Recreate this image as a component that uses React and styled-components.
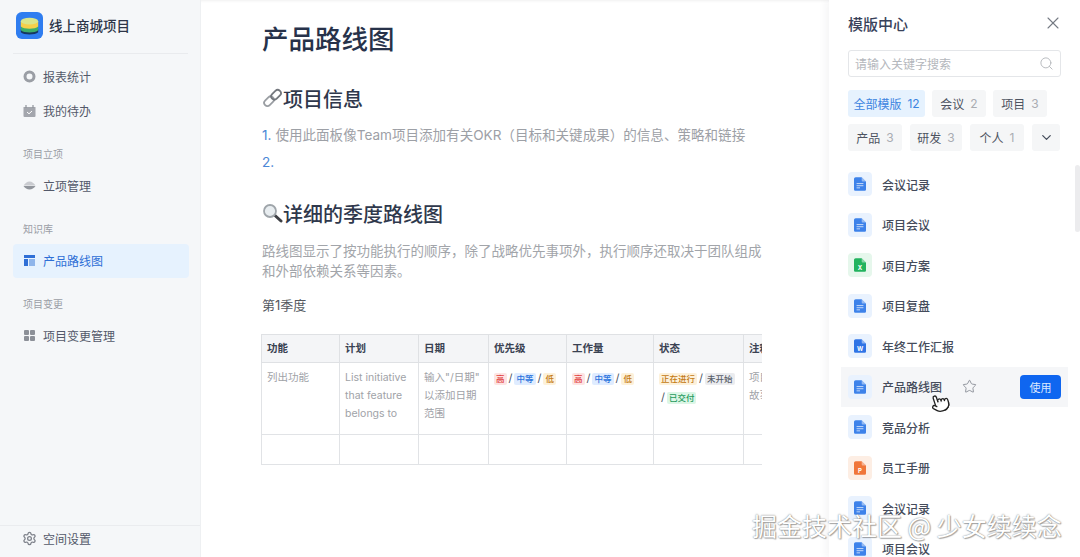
import styled, { createGlobalStyle } from "styled-components";
import { ChevronDown, Pointer, Search, Settings, Star, X } from "lucide-react";

const GlobalStyle = createGlobalStyle`
  html, body {
    margin: 0;
    height: 100%;
    overflow: hidden;
    background: #fff;
  }
  * { box-sizing: border-box; }
  body {
    font-family: Inter, "Noto Sans CJK SC", "Noto Sans", sans-serif;
  }
`;

const Page = styled.div`
  position: relative;
  display: flex;
  width: 1080px;
  height: 557px;
  overflow: hidden;
`;

/* ---------- sidebar ---------- */
const Sidebar = styled.aside`
  width: 201px;
  flex: none;
  display: flex;
  flex-direction: column;
  background: #f5f7f9;
  border-right: 1px solid #eef0f2;
`;

const Brand = styled.div`
  height: 54px;
  margin: 0 12px 5.5px 13px;
  padding: 0 3px 3px 3px;
  display: flex;
  align-items: center;
  gap: 6px;
  border-bottom: 1px solid #e9ebee;
  font-size: 13.5px;
  font-weight: 500;
  color: #2e3648;
`;

const Nav = styled.nav`
  flex: 1;
  padding: 0 11px 0 13px;
`;

const NavItem = styled.div`
  height: 34px;
  padding: 0 10px 1px;
  display: flex;
  align-items: center;
  gap: 7px;
  border-radius: 4px;
  font-size: 12px;
  color: ${(p) => (p.$active ? "#2e6fd6" : "#53596a")};
  background: ${(p) => (p.$active ? "#e6f2fe" : "transparent")};
`;

const SectionLabel = styled.div`
  height: 41px;
  padding: 17px 10px 0;
  font-size: 10px;
  line-height: 18px;
  color: #9a9ea6;
`;

const SidebarFooter = styled.div`
  height: 32px;
  padding: 0 22px 6px;
  display: flex;
  align-items: center;
  gap: 6px;
  border-top: 1px solid #eaecef;
  font-size: 12px;
  color: #53596a;
`;

/* ---------- document ---------- */
const Main = styled.main`
  width: 628px;
  flex: none;
  padding: 0 67px 0 61px;
  overflow: hidden;
  box-shadow: inset 0 3px 3px -2px #f0f0f0;
`;

const Title = styled.h1`
  margin: 0;
  padding-top: 20px;
  font-size: 26.5px;
  line-height: 38px;
  font-weight: 500;
  color: #27324a;
`;

const Heading = styled.h2`
  margin: ${(p) => p.$top}px 0 0;
  display: flex;
  align-items: center;
  height: 30px;
  font-size: 20px;
  font-weight: 500;
  color: #2f384c;
`;

const List = styled.ol`
  list-style: none;
  margin: 9px 0 0;
  padding: 0;
`;

const ListRow = styled.li`
  display: flex;
  gap: 4px;
  height: 27px;
  line-height: 27px;
  font-size: 13.55px;
  color: #9da0a6;
  white-space: nowrap;
`;

const ListNo = styled.span`
  color: #4a87d6;
`;

const Paragraph = styled.p`
  margin: 13px 0 0;
  font-size: 13.5px;
  line-height: 20px;
  color: #a2a5aa;
`;

const SubTitle = styled.div`
  margin-top: 14px;
  font-size: 13px;
  line-height: 20px;
  color: #55595f;
`;

const TableWrap = styled.div`
  width: 501px;
  margin: 19px 0 0 -1px;
  overflow: hidden;
`;

const Table = styled.table`
  width: 582px;
  table-layout: fixed;
  border-collapse: collapse;
  border: 1px solid #dfe1e4;
`;

const Th = styled.th`
  height: 28px;
  padding: 0 5px 2px;
  border: 1px solid #dfe1e4;
  background: #f4f5f7;
  text-align: left;
  font-size: 10.5px;
  font-weight: 700;
  color: #3a4252;
  white-space: nowrap;
`;

const Td = styled.td`
  height: ${(p) => p.$h}px;
  padding: 6px 5px 0;
  border: 1px solid #e1e3e6;
  vertical-align: top;
  font-size: 10.5px;
  line-height: 18px;
  color: #a0a2a7;
`;

const Chip = styled.span`
  display: inline-block;
  padding: 0 2px;
  border-radius: 2px;
  font-size: 8.5px;
  line-height: 12px;
  font-weight: 500;
  color: ${(p) => p.$fg};
  background: ${(p) => p.$bg};
`;

const Slash = styled.span`
  margin: 0 2px 0 2px;
  font-size: 11px;
  color: #4b5363;
`;

/* ---------- template panel ---------- */
const Panel = styled.aside`
  position: relative;
  flex: 1;
  min-width: 0;
  padding-left: 19px;
  background: #fff;
  box-shadow: -3px 0 8px rgba(30, 40, 60, 0.05);
`;

const PanelHead = styled.div`
  height: 50px;
  padding: 0 17px 4px 0;
  display: flex;
  align-items: center;
  justify-content: space-between;
  font-size: 15px;
  font-weight: 500;
  color: #39425a;
`;

const SearchBox = styled.div`
  width: 213px;
  height: 27px;
  padding: 0 6px;
  display: flex;
  align-items: center;
  justify-content: space-between;
  border: 1px solid #e4e6e9;
  border-radius: 3px;
  font-size: 12px;
  color: #b4b7bc;
`;

const TagRow = styled.div`
  margin-top: ${(p) => p.$top}px;
  display: flex;
  gap: ${(p) => p.$gap}px;
`;

const Tag = styled.div`
  width: ${(p) => p.$w}px;
  height: 27px;
  display: flex;
  align-items: center;
  justify-content: center;
  gap: 6px;
  border-radius: 3px;
  font-size: 12px;
  color: ${(p) => (p.$active ? "#3c84e0" : "#4d5361")};
  background: ${(p) => (p.$active ? "#e6f2fe" : "#f5f6f7")};
`;

const TagCount = styled.span`
  color: ${(p) => (p.$active ? "#3c84e0" : "#a9acb2")};
`;

const Templates = styled.div`
  margin: 13px 0 0 -7px;
`;

const TemplateRow = styled.div`
  position: relative;
  width: 227px;
  height: 40.5px;
  padding: 0 7px;
  display: flex;
  align-items: center;
  gap: 10px;
  font-size: 12px;
  font-weight: 500;
  color: #454c5b;
  background: ${(p) => (p.$hover ? "#f5f6f8" : "transparent")};
`;

const IconTile = styled.div`
  width: 24px;
  height: 24px;
  flex: none;
  display: flex;
  align-items: center;
  justify-content: center;
  border-radius: 4px;
  background: ${(p) => p.$bg};
`;

const StarWrap = styled.span`
  display: flex;
  margin-left: 10px;
  color: #7c818b;
`;

const UseButton = styled.button`
  margin-left: auto;
  width: 41px;
  height: 24px;
  border: none;
  border-radius: 4px;
  background: #0f66f0;
  color: #dbe8ff;
  font-family: inherit;
  font-size: 11px;
`;

const Scrollbar = styled.div`
  position: absolute;
  top: 165px;
  right: 0;
  width: 5px;
  height: 67px;
  border-radius: 3px;
  background: #ececee;
`;

const Cursor = styled.div`
  position: absolute;
  left: 930px;
  top: 393px;
  display: flex;
  transform: rotate(-18deg);
`;

const Watermark = styled.div`
  position: absolute;
  left: 752px;
  top: 509px;
  font-family: "Noto Sans CJK SC", sans-serif;
  font-size: 25px;
  line-height: 32px;
  color: #fff;
  white-space: nowrap;
  text-shadow: 0 0 1.5px #666, 1px 1px 1px rgba(0, 0, 0, 0.3);
`;

/* ---------- drawings ---------- */
const Logo = () => (
  <svg width="27" height="27" viewBox="0 0 28 28">
    <rect width="28" height="28" rx="6" fill="#2f7df0" />
    <path d="M5 18c3 3 15 3 18 0v3c-3 3-15 3-18 0z" fill="#16365f" />
    <path d="M5 14c3 3 15 3 18 0v5c-3 3-15 3-18 0z" fill="#3cae6a" />
    <path d="M5 10v5c3 3 15 3 18 0v-5z" fill="#f5cf4a" />
    <ellipse cx="14" cy="9.500" rx="9" ry="3.500" fill="#d9e58b" />
  </svg>
);

const RingIcon = () => (
  <svg width="13" height="13" viewBox="0 0 13 13">
    <circle cx="6.500" cy="6.500" r="4.500" fill="none" stroke="#9a9ea5" strokeWidth="3" />
  </svg>
);

const CalendarIcon = () => (
  <svg width="13" height="13" viewBox="0 0 13 13">
    <path d="M0.500 3h12v9a1 1 0 0 1-1 1h-10a1 1 0 0 1-1-1z" fill="#a3a6ad" />
    <path d="M3 1v3M10 1v3" stroke="#8f939b" strokeWidth="1.200" />
    <path d="M4 8l2 1.800L9 7" fill="none" stroke="#fff" strokeWidth="1" />
  </svg>
);

const StackIcon = () => (
  <svg width="13" height="13" viewBox="0 0 13 13">
    <path d="M6.500 2.500C9 2.500 11 4.500 12.500 6.500H0.500C2 4.500 4 2.500 6.500 2.500z" fill="#c9cbd0" />
    <path d="M0.500 7H12.500C11 9 9 10.500 6.500 10.500S2 9 0.500 7z" fill="#92969d" />
  </svg>
);

const RoadmapIcon = () => (
  <svg width="13" height="13" viewBox="0 0 13 13">
    <rect x="1" y="1" width="11" height="3" fill="#2f6fd6" />
    <rect x="1" y="5" width="4" height="7" fill="#2f6fd6" />
    <rect x="6" y="5" width="6" height="7" fill="#8fb5ea" />
  </svg>
);

const GridIcon = () => (
  <svg width="13" height="13" viewBox="0 0 13 13" fill="#8c9098">
    <rect x="1" y="1" width="5" height="5" rx="1" />
    <rect x="7" y="1" width="5" height="5" rx="1" />
    <rect x="1" y="7" width="5" height="5" rx="1" />
    <rect x="7" y="7" width="5" height="5" rx="1" />
  </svg>
);

const LinkEmoji = () => (
  <svg width="21" height="20" viewBox="0 0 21 20" fill="none">
    <rect x="1.500" y="10" width="11" height="6.500" rx="3.200" transform="rotate(-45 7 13.200)" stroke="#9a9ea3" strokeWidth="1.800" />
    <rect x="8.500" y="3.500" width="11" height="6.500" rx="3.200" transform="rotate(-45 14 6.700)" stroke="#74787e" strokeWidth="1.800" />
  </svg>
);

const GlassEmoji = () => (
  <svg width="21" height="20" viewBox="0 0 21 20" fill="none">
    <path d="M13 12.500l6 5.500" stroke="#3d3f44" strokeWidth="3" strokeLinecap="round" />
    <circle cx="8" cy="8" r="6" fill="#e8edf0" stroke="#9fa5aa" strokeWidth="1.800" />
  </svg>
);

const FileIcon = ({ color, mark }) => (
  <svg width="12" height="14" viewBox="0 0 14 16">
    <path d="M2 0h7l5 5v9.500A1.500 1.500 0 0 1 12.500 16h-11A1.500 1.500 0 0 1 0 14.500V2A2 2 0 0 1 2 0z" fill={color} />
    <path d="M9 0l5 5H10a1 1 0 0 1-1-1z" fill="#fff" fillOpacity="0.45" />
    {mark ? (
      <text x="7" y="13.500" textAnchor="middle" fontSize="7" fontWeight="700" fill="#fff">{mark}</text>
    ) : (
      <path d="M3 7.500h8M3 10h8M3 12.500h4" stroke="#fff" strokeOpacity="0.8" strokeWidth="1" />
    )}
  </svg>
);

const kinds = {
  doc: { bg: "#e9f2fe", color: "#3d82ea" },
  xls: { bg: "#e6f7ec", color: "#22b35e", mark: "X" },
  word: { bg: "#e9f2fe", color: "#2f74e6", mark: "W" },
  ppt: { bg: "#fdeee4", color: "#f0763a", mark: "P" },
};

const templates = [
  ["会议记录", "doc"],
  ["项目会议", "doc"],
  ["项目方案", "xls"],
  ["项目复盘", "doc"],
  ["年终工作汇报", "word"],
  ["产品路线图", "doc", true],
  ["竞品分析", "doc"],
  ["员工手册", "ppt"],
  ["会议记录", "doc"],
  ["项目会议", "doc"],
];

const High = () => <Chip $fg="#e2413f" $bg="#fde4e3">高</Chip>;
const Mid = () => <Chip $fg="#2a73dd" $bg="#dfecff">中等</Chip>;
const Low = () => <Chip $fg="#c47a14" $bg="#fdf1da">低</Chip>;

const App = () => {
  return (
    <Page>
      <GlobalStyle />
      <Sidebar>
        <Brand>
          <Logo />
          线上商城项目
        </Brand>
        <Nav>
          <NavItem><RingIcon />报表统计</NavItem>
          <NavItem><CalendarIcon />我的待办</NavItem>
          <SectionLabel>项目立项</SectionLabel>
          <NavItem><StackIcon />立项管理</NavItem>
          <SectionLabel>知识库</SectionLabel>
          <NavItem $active><RoadmapIcon />产品路线图</NavItem>
          <SectionLabel>项目变更</SectionLabel>
          <NavItem><GridIcon />项目变更管理</NavItem>
        </Nav>
        <SidebarFooter>
          <Settings size={15} color="#7d818a" strokeWidth={2} />
          空间设置
        </SidebarFooter>
      </Sidebar>

      <Main>
        <Title>产品路线图</Title>
        <Heading $top={25}><LinkEmoji />项目信息</Heading>
        <List>
          <ListRow><ListNo>1.</ListNo>使用此面板像Team项目添加有关OKR（目标和关键成果）的信息、策略和链接</ListRow>
          <ListRow><ListNo>2.</ListNo></ListRow>
        </List>
        <Heading $top={22}><GlassEmoji />详细的季度路线图</Heading>
        <Paragraph>
          路线图显示了按功能执行的顺序，除了战略优先事项外，执行顺序还取决于团队组成和外部依赖关系等因素。
        </Paragraph>
        <SubTitle>第1季度</SubTitle>
        <TableWrap>
          <Table>
            <colgroup>
              <col width="78" />
              <col width="79" />
              <col width="70" />
              <col width="78" />
              <col width="87" />
              <col width="90" />
              <col width="100" />
            </colgroup>
            <thead>
              <tr>
                <Th>功能</Th>
                <Th>计划</Th>
                <Th>日期</Th>
                <Th>优先级</Th>
                <Th>工作量</Th>
                <Th>状态</Th>
                <Th>注释</Th>
              </tr>
            </thead>
            <tbody>
              <tr>
                <Td $h={72}>列出功能</Td>
                <Td $h={72}>List initiative that feature belongs to</Td>
                <Td $h={72}>输入"/日期"<br />以添加日期范围</Td>
                <Td $h={72}><High /><Slash>/</Slash><Mid /><Slash>/</Slash><Low /></Td>
                <Td $h={72}><High /><Slash>/</Slash><Mid /><Slash>/</Slash><Low /></Td>
                <Td $h={72}>
                  <Chip $fg="#c47a14" $bg="#fdf1da">正在进行</Chip>
                  <Slash>/</Slash>
                  <Chip $fg="#5a5f69" $bg="#ebecef">未开始</Chip>
                  <br />
                  <Slash>/</Slash>
                  <Chip $fg="#1f9a5c" $bg="#dcf6e6">已交付</Chip>
                </Td>
                <Td $h={72}>项目背景<br />故事</Td>
              </tr>
              <tr>
                <Td $h={30} />
                <Td $h={30} />
                <Td $h={30} />
                <Td $h={30} />
                <Td $h={30} />
                <Td $h={30} />
                <Td $h={30} />
              </tr>
            </tbody>
          </Table>
        </TableWrap>
      </Main>

      <Panel>
        <PanelHead>
          模版中心
          <X size={20} color="#757a84" strokeWidth={1.3} />
        </PanelHead>
        <SearchBox>
          请输入关键字搜索
          <Search size={15} color="#b4b7bc" strokeWidth={1.5} />
        </SearchBox>
        <TagRow $top={13} $gap={7}>
          <Tag $w={77} $active>全部模版<TagCount $active>12</TagCount></Tag>
          <Tag $w={54}>会议<TagCount>2</TagCount></Tag>
          <Tag $w={54}>项目<TagCount>3</TagCount></Tag>
        </TagRow>
        <TagRow $top={7} $gap={8}>
          <Tag $w={54}>产品<TagCount>3</TagCount></Tag>
          <Tag $w={52}>研发<TagCount>3</TagCount></Tag>
          <Tag $w={54}>个人<TagCount>1</TagCount></Tag>
          <Tag $w={28}><ChevronDown size={15} color="#454c5b" strokeWidth={2} /></Tag>
        </TagRow>
        <Templates>
          {templates.map(([name, kind, hover], i) => (
            <TemplateRow key={i} $hover={hover}>
              <IconTile $bg={kinds[kind].bg}>
                <FileIcon color={kinds[kind].color} mark={kinds[kind].mark} />
              </IconTile>
              {name}
              {hover && (
                <>
                  <StarWrap><Star size={15} strokeWidth={1.3} /></StarWrap>
                  <UseButton>使用</UseButton>
                </>
              )}
            </TemplateRow>
          ))}
        </Templates>
        <Scrollbar />
      </Panel>

      <Cursor>
        <Pointer size={20} fill="#fff" color="#222" strokeWidth={1.6} />
      </Cursor>
      <Watermark>掘金技术社区 @ 少女续续念</Watermark>
    </Page>
  );
};

export default App;
